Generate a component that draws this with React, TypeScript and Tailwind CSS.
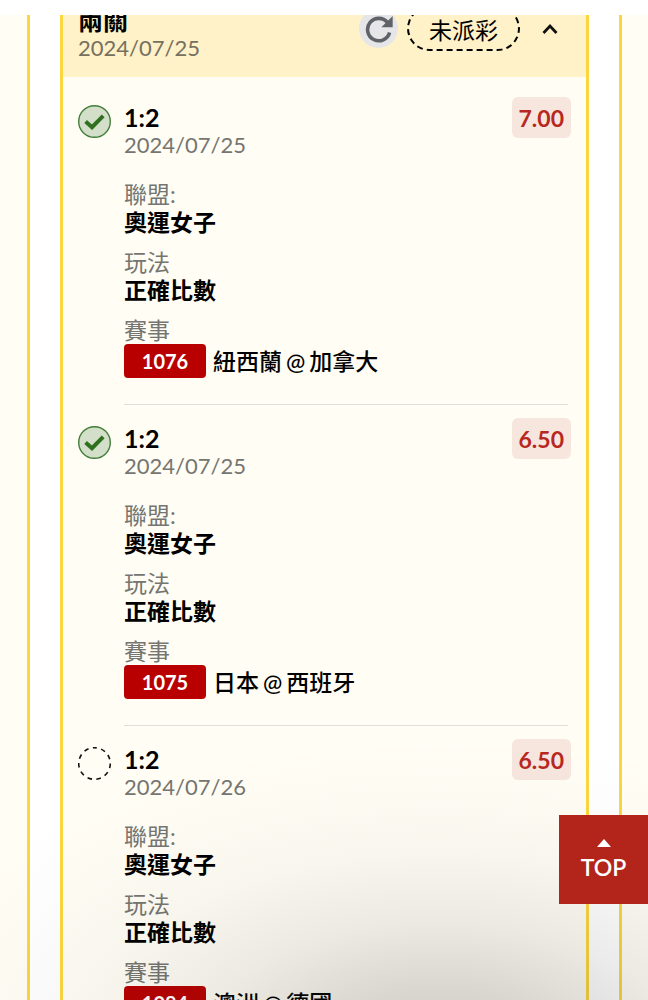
type Status = "won" | "pending";

type Leg = {
  id: string;
  status: Status;
  pick: string;
  date: string;
  odds: string;
  league: string;
  play: string;
  match: string;
};

const legs: Leg[] = [
  { id: "1076", status: "won", pick: "1:2", date: "2024/07/25", odds: "7.00", league: "奧運女子", play: "正確比數", match: "紐西蘭 @ 加拿大" },
  { id: "1075", status: "won", pick: "1:2", date: "2024/07/25", odds: "6.50", league: "奧運女子", play: "正確比數", match: "日本 @ 西班牙" },
  { id: "1084", status: "pending", pick: "1:2", date: "2024/07/26", odds: "6.50", league: "奧運女子", play: "正確比數", match: "澳洲 @ 德國" }
];

const StatusIcon = ({ status }: { status: Status }) =>
  status === "won" ? (
    <svg viewBox="0 0 33 33" className="size-[33px]" role="img" aria-label="過關">
      <circle cx="16.5" cy="16.5" r="15.8" fill="#d4dfca" stroke="#417f39" strokeWidth="1.4" />
      <path d="M7.6 16.6L14 22.2L25.2 10.8" fill="none" stroke="#2f711f" strokeWidth="4" />
    </svg>
  ) : (
    <svg viewBox="0 0 33 33" className="size-[33px]" role="img" aria-label="未開賽">
      <circle
        cx="16.5"
        cy="16.5"
        r="15.8"
        fill="none"
        stroke="#111"
        strokeWidth="1.6"
        strokeDasharray="4.6 4.427"
        strokeDashoffset="2.3"
        transform="rotate(-90 16.5 16.5)"
      />
    </svg>
  );

const Field = ({ label, value }: { label: string; value: string }) => (
  <div className="mb-3">
    <dt className="text-[#757571]">{label}</dt>
    <dd className="font-bold text-black">{value}</dd>
  </div>
);

const MatchName = ({ match }: { match: string }) => {
  const [away, home] = match.split(" @ ");
  return (
    <span className="flex gap-1">
      <span>{away}</span>
      <span>@</span>
      <span>{home}</span>
    </span>
  );
};

const LegRow = ({ leg }: { leg: Leg }) => (
  <li className="flex gap-[13px]">
    <div className="shrink-0 pt-[21px]">
      <StatusIcon status={leg.status} />
    </div>
    <div className="min-w-0 flex-1">
      <div className="flex items-start justify-between">
        <div className="pt-[19px]">
          <h3 className="text-[25px] leading-7 font-bold text-black">{leg.pick}</h3>
          <p className="text-[22px] text-[#757571]">{leg.date}</p>
        </div>
        <span className="mt-[13px] rounded-md bg-[#f7e6de] px-[7px] pt-[7px] pb-[6px] font-bold text-[#b7281f]">
          {leg.odds}
        </span>
      </div>
      <dl className="mt-[21px]">
        <Field label="聯盟:" value={leg.league} />
        <Field label="玩法" value={leg.play} />
        <dt className="text-[#757571]">賽事</dt>
        <dd className="flex items-center gap-[7px] font-medium text-black">
          <span className="w-[82px] rounded-sm bg-[#b80000] text-center text-xl leading-[34px] font-bold text-white">
            {leg.id}
          </span>
          <MatchName match={leg.match} />
        </dd>
      </dl>
      <hr className="mt-[26px] mr-[3px] border-[#dfded9]" />
    </div>
  </li>
);

export default function App() {
  return (
    <div className="relative h-screen overflow-hidden bg-white pt-[15px] font-['Lato','Noto_Sans_CJK_TC',sans-serif] text-[23px] leading-7">
      <main className="flex h-full gap-[30px] overflow-hidden">
        <div className="w-[30px] shrink-0 border-r-3 border-[#fbd63f] bg-[#fffdf4]" />

        <section className="min-w-0 flex-1 border-x-3 border-[#fbd63f] bg-[#fffdf4]">
          <header className="-mt-[9px] flex h-[71px] justify-between bg-[#fff1c8] pr-4 pl-[15px]">
            <div>
              <h2 className="text-[25px] leading-7 font-bold text-black">兩關</h2>
              <p className="text-[22px] text-[#757060]">2024/07/25</p>
            </div>
            <div className="flex items-center self-start">
              <button
                type="button"
                aria-label="重新整理"
                className="mr-[9px] flex size-[39px] items-center justify-center rounded-full bg-[#e6e6e8]"
              >
                <svg viewBox="0 0 28 28" className="size-7">
                  <path d="M22.5 7.5A11.2 11.2 0 1 0 24.6 17.5" fill="none" stroke="#5f6368" strokeWidth="3.6" />
                  <path d="M27.7 1V12.3H16.4Z" fill="#5f6368" />
                </svg>
              </button>
              <span className="rounded-full border-2 border-dashed border-black px-5 pt-2 pb-[5px] text-black">
                未派彩
              </span>
              <button type="button" aria-label="收合" className="mr-3 ml-[22px]">
                <svg viewBox="0 0 16 16" className="size-4">
                  <path d="M1.5 12L8 5L14.5 12" fill="none" stroke="#111" strokeWidth="2.8" />
                </svg>
              </button>
            </div>
          </header>
          <ul className="pt-[7px] pr-[15px] pl-[15px]">
            {legs.map((leg) => (
              <LegRow key={leg.id} leg={leg} />
            ))}
          </ul>
        </section>

        <div className="w-[29px] shrink-0 border-l-3 border-[#fbd63f] bg-[#fffdf4]" />
      </main>

      <div className="pointer-events-none absolute inset-x-0 bottom-0 h-[280px] bg-[radial-gradient(ellipse_90%_110%_at_68%_116%,rgba(40,40,38,0.22),rgba(40,40,38,0.18)_18%,rgba(40,40,38,0.09)_40%,rgba(40,40,38,0.035)_62%,rgba(40,40,38,0.01)_82%,transparent)]" />

      <a
        href="#"
        className="absolute right-0 bottom-24 flex size-[89px] flex-col items-center justify-center bg-[#b3251b] text-white"
      >
        <svg viewBox="0 0 14 8" className="mb-1.5 h-2 w-3.5" aria-hidden="true">
          <path d="M0 8L7 0L14 8Z" fill="currentColor" />
        </svg>
        <span className="font-semibold">TOP</span>
      </a>
    </div>
  );
}
